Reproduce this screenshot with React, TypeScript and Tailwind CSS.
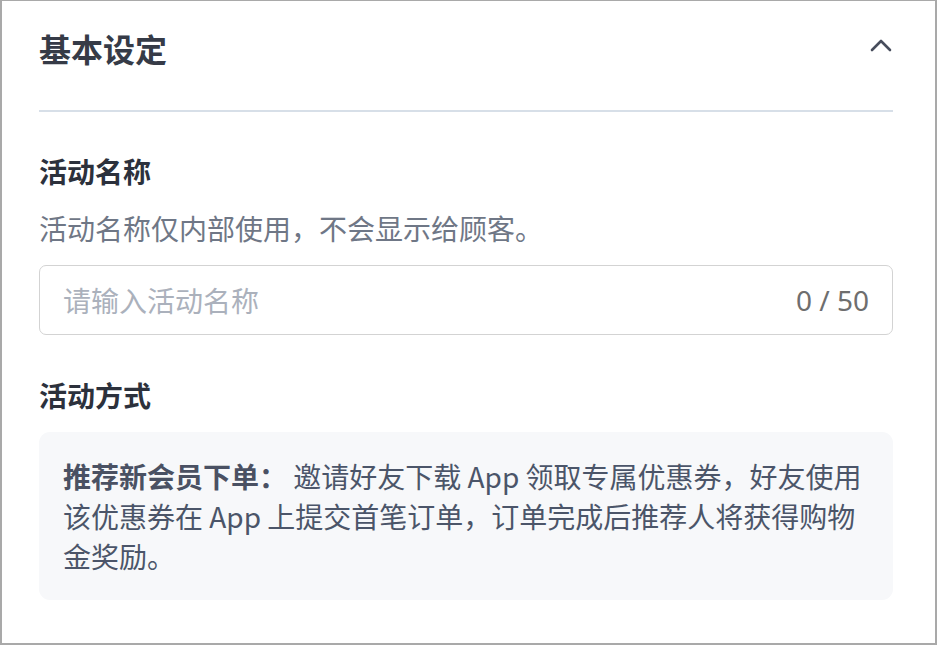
import React, { useState } from 'react';

const font = { fontFamily: '"Noto Sans CJK SC", "Noto Sans", sans-serif' };

const ChevronUp = () => (
  <svg width="22" height="14" viewBox="0 0 22 14" fill="none" className="text-[#474d5c]">
    <path d="M2 12 L11 3 L20 12" stroke="currentColor" strokeWidth="2.6" strokeLinecap="round" strokeLinejoin="round" />
  </svg>
);

const App = () => {
  const [name, setName] = useState('');

  return (
    <div className="w-[938px] h-[646px] bg-white" style={font}>
      <div className="w-[937px] h-[645px] border-l-2 border-r-2 border-t border-b-2 border-[#a9a9a9] pl-[37px] pr-[42px] pt-[25px]">
        {/* header */}
        <div className="flex items-center justify-between h-[44px]">
          <h2 className="text-[32px] leading-[44px] font-bold text-[#363b47]">基本设定</h2>
          <div className="pr-[1px] -mt-[6px]">
            <ChevronUp />
          </div>
        </div>
        <div className="mt-[40px] h-[2px] bg-[#d7dfe8]" />

        {/* activity name */}
        <div className="mt-[39px]">
          <label className="block text-[28px] leading-[40px] font-semibold text-[#2c313c]">活动名称</label>
          <p className="mt-[17px] text-[28px] leading-[40px] text-[#6f7786]">活动名称仅内部使用，不会显示给顾客。</p>
          <div className="mt-[17px] flex items-center h-[70px] border border-[#d3d3d3] rounded-[7px] px-[23px]">
            <input
              value={name}
              maxLength={50}
              onChange={(e) => setName(e.target.value)}
              placeholder="请输入活动名称"
              className="flex-1 bg-transparent outline-none text-[28px] text-[#2c313c] placeholder:text-[#abb1bc]"
              style={font}
            />
            <span className="text-[28px] text-[#6e6e6e]" style={{ fontFamily: '"Noto Sans", sans-serif' }}>
              {name.length} / 50
            </span>
          </div>
        </div>

        {/* activity type */}
        <div className="mt-[40px]">
          <label className="block text-[28px] leading-[40px] font-semibold text-[#2c313c]">活动方式</label>
          <div className="mt-[17px] bg-[#f7f8fa] rounded-[11px] px-[24px] py-[24px] text-[28px] leading-[40px] text-[#4b5569]">
            <span className="font-bold text-[#4a5163]">推荐新会员下单：</span>
            {' '}邀请好友下载 App 领取专属优惠券，好友使用该优惠券在 App 上提交首笔订单，订单完成后推荐人将获得购物金奖励。
          </div>
        </div>
      </div>
    </div>
  );
};

export default App;
